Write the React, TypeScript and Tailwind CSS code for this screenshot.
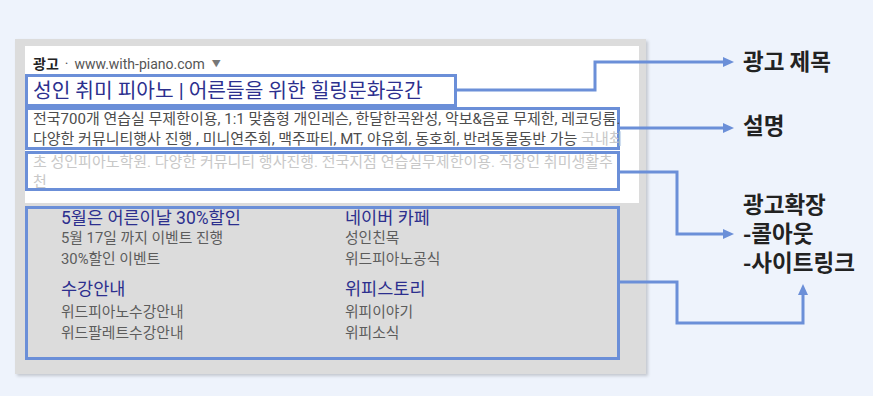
import React from 'react';

const BLUE = '#6b8fd8';

const callouts = [
  { title: '5월은 어른이날 30%할인', items: ['5월 17일 까지 이벤트 진행', '30%할인 이벤트'] },
  { title: '네이버 카페', items: ['성인친목', '위드피아노공식'] },
  { title: '수강안내', items: ['위드피아노수강안내', '위드팔레트수강안내'] },
  { title: '위피스토리', items: ['위피이야기', '위피소식'] },
];

function CalloutBlock({ title, items, first }: { title: string; items: string[]; first: boolean }) {
  return (
    <div className={first ? '' : 'mt-[8px]'}>
      <p className={`text-[17.5px] text-[#2c2f8e] whitespace-nowrap ${first ? 'leading-[18px]' : 'leading-[22px]'}`}>{title}</p>
      <div className={first ? 'mt-[1px]' : 'mt-[2px]'}>
        {items.map((it) => (
          <p key={it} className="text-[14.8px] leading-[21px] text-[#5c5c5c] whitespace-nowrap">{it}</p>
        ))}
      </div>
    </div>
  );
}

// connectors between the ad boxes and the labels on the right
function Connectors() {
  return (
    <svg className="absolute inset-0 pointer-events-none" width="873" height="396" viewBox="0 0 873 396">
      <g fill="none" stroke={BLUE} strokeWidth="3">
        <polyline points="457,90 595,90 595,62 725,62" />
        <polyline points="620,128 725,128" />
        <polyline points="620,172 677,172 677,234 725,234" />
        <polyline points="620,282 677,282 677,323 803,323 803,293" />
      </g>
      <g fill={BLUE}>
        <polygon points="723,57 734,62 723,67" />
        <polygon points="723,123 734,128 723,133" />
        <polygon points="723,229 734,234 723,239" />
        <polygon points="798,295 803,284 808,295" />
      </g>
    </svg>
  );
}

export default function App() {
  return (
    <div
      className="relative w-[873px] h-[396px] bg-[#eef3fc] overflow-hidden flex"
      style={{ fontFamily: 'Roboto, "Noto Sans CJK KR", sans-serif' }}
    >
      {/* ad screenshot panel */}
      <div className="ml-[15px] mt-[39px] w-[631px] h-[335px] bg-[#dcdcdc] shadow-[2px_2px_3px_rgba(0,0,0,0.18)] pl-[10px] pt-[7px]">
        <div className="w-[614px] h-[157px] bg-white">
          <div className="pt-[8px] pl-[8px] h-[28px] flex items-center text-[14px] leading-[20px] whitespace-nowrap">
            <span className="font-bold text-[#222]">광고</span>
            <span className="text-[#555] ml-[6px]">·</span>
            <span className="text-[#555] ml-[6px]">www.with-piano.com</span>
            <span className="text-[#777] text-[9px] ml-[7px]">▼</span>
          </div>

          <div className="w-[432px] h-[33px] border-[3px] border-[#6b8fd8] pl-[5px] pt-[1px]">
            <p className="text-[20.3px] leading-[27px] text-[#2c2f8e] whitespace-nowrap">
              성인 취미 피아노 | 어른들을 위한 힐링문화공간
            </p>
          </div>

          <div className="w-[595px] h-[43px] border-[3px] border-[#6b8fd8] pl-[5px] overflow-visible">
            <div className="-mt-[1px] text-[15px] leading-[20px] text-[#4d4d4d] whitespace-nowrap">
              <p>전국700개 연습실 무제한이용, 1:1 맞춤형 개인레슨, 한달한곡완성, 악보&amp;음료 무제한, 레코딩룸.</p>
              <p>
                다양한 커뮤니티행사 진행 , 미니연주회, 맥주파티, MT, 야유회, 동호회, 반려동물동반 가능{' '}
                <span className="text-[#c8c8c8]">국내최</span>
              </p>
            </div>
          </div>

          <div className="mt-[1px] w-[595px] h-[40px] border-[3px] border-[#6b8fd8] pl-[5px]">
            <div className="-mt-[2px] text-[15px] leading-[20px] text-[#c8c8c8] whitespace-nowrap">
              <p>초 성인피아노학원. 다양한 커뮤니티 행사진행. 전국지점 연습실무제한이용. 직장인 취미생활추</p>
              <p>천</p>
            </div>
          </div>
        </div>

        <div className="mt-[3px] w-[595px] h-[154px] border-[3px] border-[#6b8fd8] pl-[33px] grid grid-cols-[284px_1fr]">
          <div>
            <CalloutBlock {...callouts[0]} first />
            <CalloutBlock {...callouts[2]} first={false} />
          </div>
          <div>
            <CalloutBlock {...callouts[1]} first />
            <CalloutBlock {...callouts[3]} first={false} />
          </div>
        </div>
      </div>

      {/* labels */}
      <div
        className="ml-[97px] pt-[45px] text-[22.5px] leading-[30px] font-bold text-[#222] whitespace-nowrap"
        style={{ fontFamily: '"Noto Sans CJK KR", sans-serif' }}
      >
        <p>광고 제목</p>
        <p className="mt-[34px]">설명</p>
        <div className="mt-[49px]">
          <p>광고확장</p>
          <p className="-mt-[1px]">-콜아웃</p>
          <p className="-mt-[1px]">-사이트링크</p>
        </div>
      </div>

      <Connectors />
    </div>
  );
}
